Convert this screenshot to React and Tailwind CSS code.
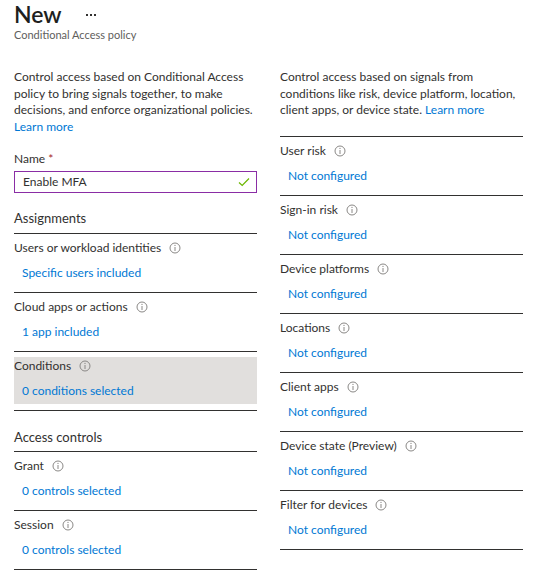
import React from 'react';

const InfoIcon = () => (
    <svg width="12" height="12" viewBox="0 0 12 12" className="ml-[8px] shrink-0">
        <circle cx="6" cy="6" r="5" fill="none" stroke="#8a8886" strokeWidth="1" />
        <line x1="6" y1="5" x2="6" y2="9" stroke="#8a8886" strokeWidth="1" />
        <circle cx="6" cy="3.4" r="0.6" fill="#8a8886" />
    </svg>
);

const Row = ({ label, value, selected }) => (
    <div className="pt-[5px] pb-[6px] border-b border-[#323130]">
        <div className={selected ? 'h-[47px] bg-[#e1dfdd]' : 'h-[47px]'}>
            <div className="flex items-center h-[18px] leading-[18px] text-[12px] text-[#323130]">
                <span>{label}</span>
                <InfoIcon />
            </div>
            <div className="mt-[7px] pl-[8px] h-[18px] leading-[18px] text-[12px] text-[#0078d4]">{value}</div>
        </div>
    </div>
);

const leftRows = [
    { label: 'Users or workload identities', value: 'Specific users included' },
    { label: 'Cloud apps or actions', value: '1 app included' },
    { label: 'Conditions', value: '0 conditions selected', selected: true },
];

const accessRows = [
    { label: 'Grant', value: '0 controls selected' },
    { label: 'Session', value: '0 controls selected' },
];

const conditionRows = [
    'User risk',
    'Sign-in risk',
    'Device platforms',
    'Locations',
    'Client apps',
    'Device state (Preview)',
    'Filter for devices',
];

export default function App() {
    return (
        <div className="w-[550px] h-[579px] bg-white overflow-hidden pl-[14px] text-[#323130] font-['Lato',sans-serif]">
            <div className="flex items-center h-[28px]">
                <h1 className="text-[23px] leading-[28px] font-semibold text-[#201f1e]">New</h1>
                <div className="flex gap-[2px] ml-[24px] mt-[2px]">
                    <span className="w-[2px] h-[2px] bg-[#323130]"></span>
                    <span className="w-[2px] h-[2px] bg-[#323130]"></span>
                    <span className="w-[2px] h-[2px] bg-[#323130]"></span>
                </div>
            </div>
            <div className="text-[11px] leading-[14px] text-[#605e5c]">Conditional Access policy</div>

            <div className="flex gap-[23px] mt-[27px]">
                <div className="w-[243px]">
                    <p className="text-[12px] leading-[16.5px]">
                        Control access based on Conditional Access policy to bring signals together, to make decisions, and enforce organizational policies.
                        <br />
                        <span className="text-[#0078d4]">Learn more</span>
                    </p>
                    <div className="mt-[15px] h-[18px] leading-[18px] text-[12px]">
                        Name <span className="text-[#a4262c]">*</span>
                    </div>
                    <div className="mt-[3px] h-[22px] border border-[#8a2da5] flex items-center justify-between pl-[8px] pr-[6px] text-[12px]">
                        <span>Enable MFA</span>
                        <svg width="12" height="10" viewBox="0 0 12 10">
                            <path d="M1 5.5 L4.2 8.5 L11 1.5" fill="none" stroke="#6bb700" strokeWidth="1.2" />
                        </svg>
                    </div>
                    <div className="mt-[15px] text-[13px] leading-[20px] pb-[5px] border-b border-[#323130]">Assignments</div>
                    {leftRows.map((r) => (
                        <Row key={r.label} {...r} />
                    ))}
                    <div className="mt-[16px] text-[13px] leading-[20px] pb-[4px] border-b border-[#323130]">Access controls</div>
                    {accessRows.map((r) => (
                        <Row key={r.label} {...r} />
                    ))}
                </div>

                <div className="w-[243px]">
                    <p className="text-[12px] leading-[16.5px] pb-[17px] border-b border-[#323130]">
                        Control access based on signals from conditions like risk, device platform, location, client apps, or device state. <span className="text-[#0078d4]">Learn more</span>
                    </p>
                    {conditionRows.map((label) => (
                        <Row key={label} label={label} value="Not configured" />
                    ))}
                </div>
            </div>
        </div>
    );
}
